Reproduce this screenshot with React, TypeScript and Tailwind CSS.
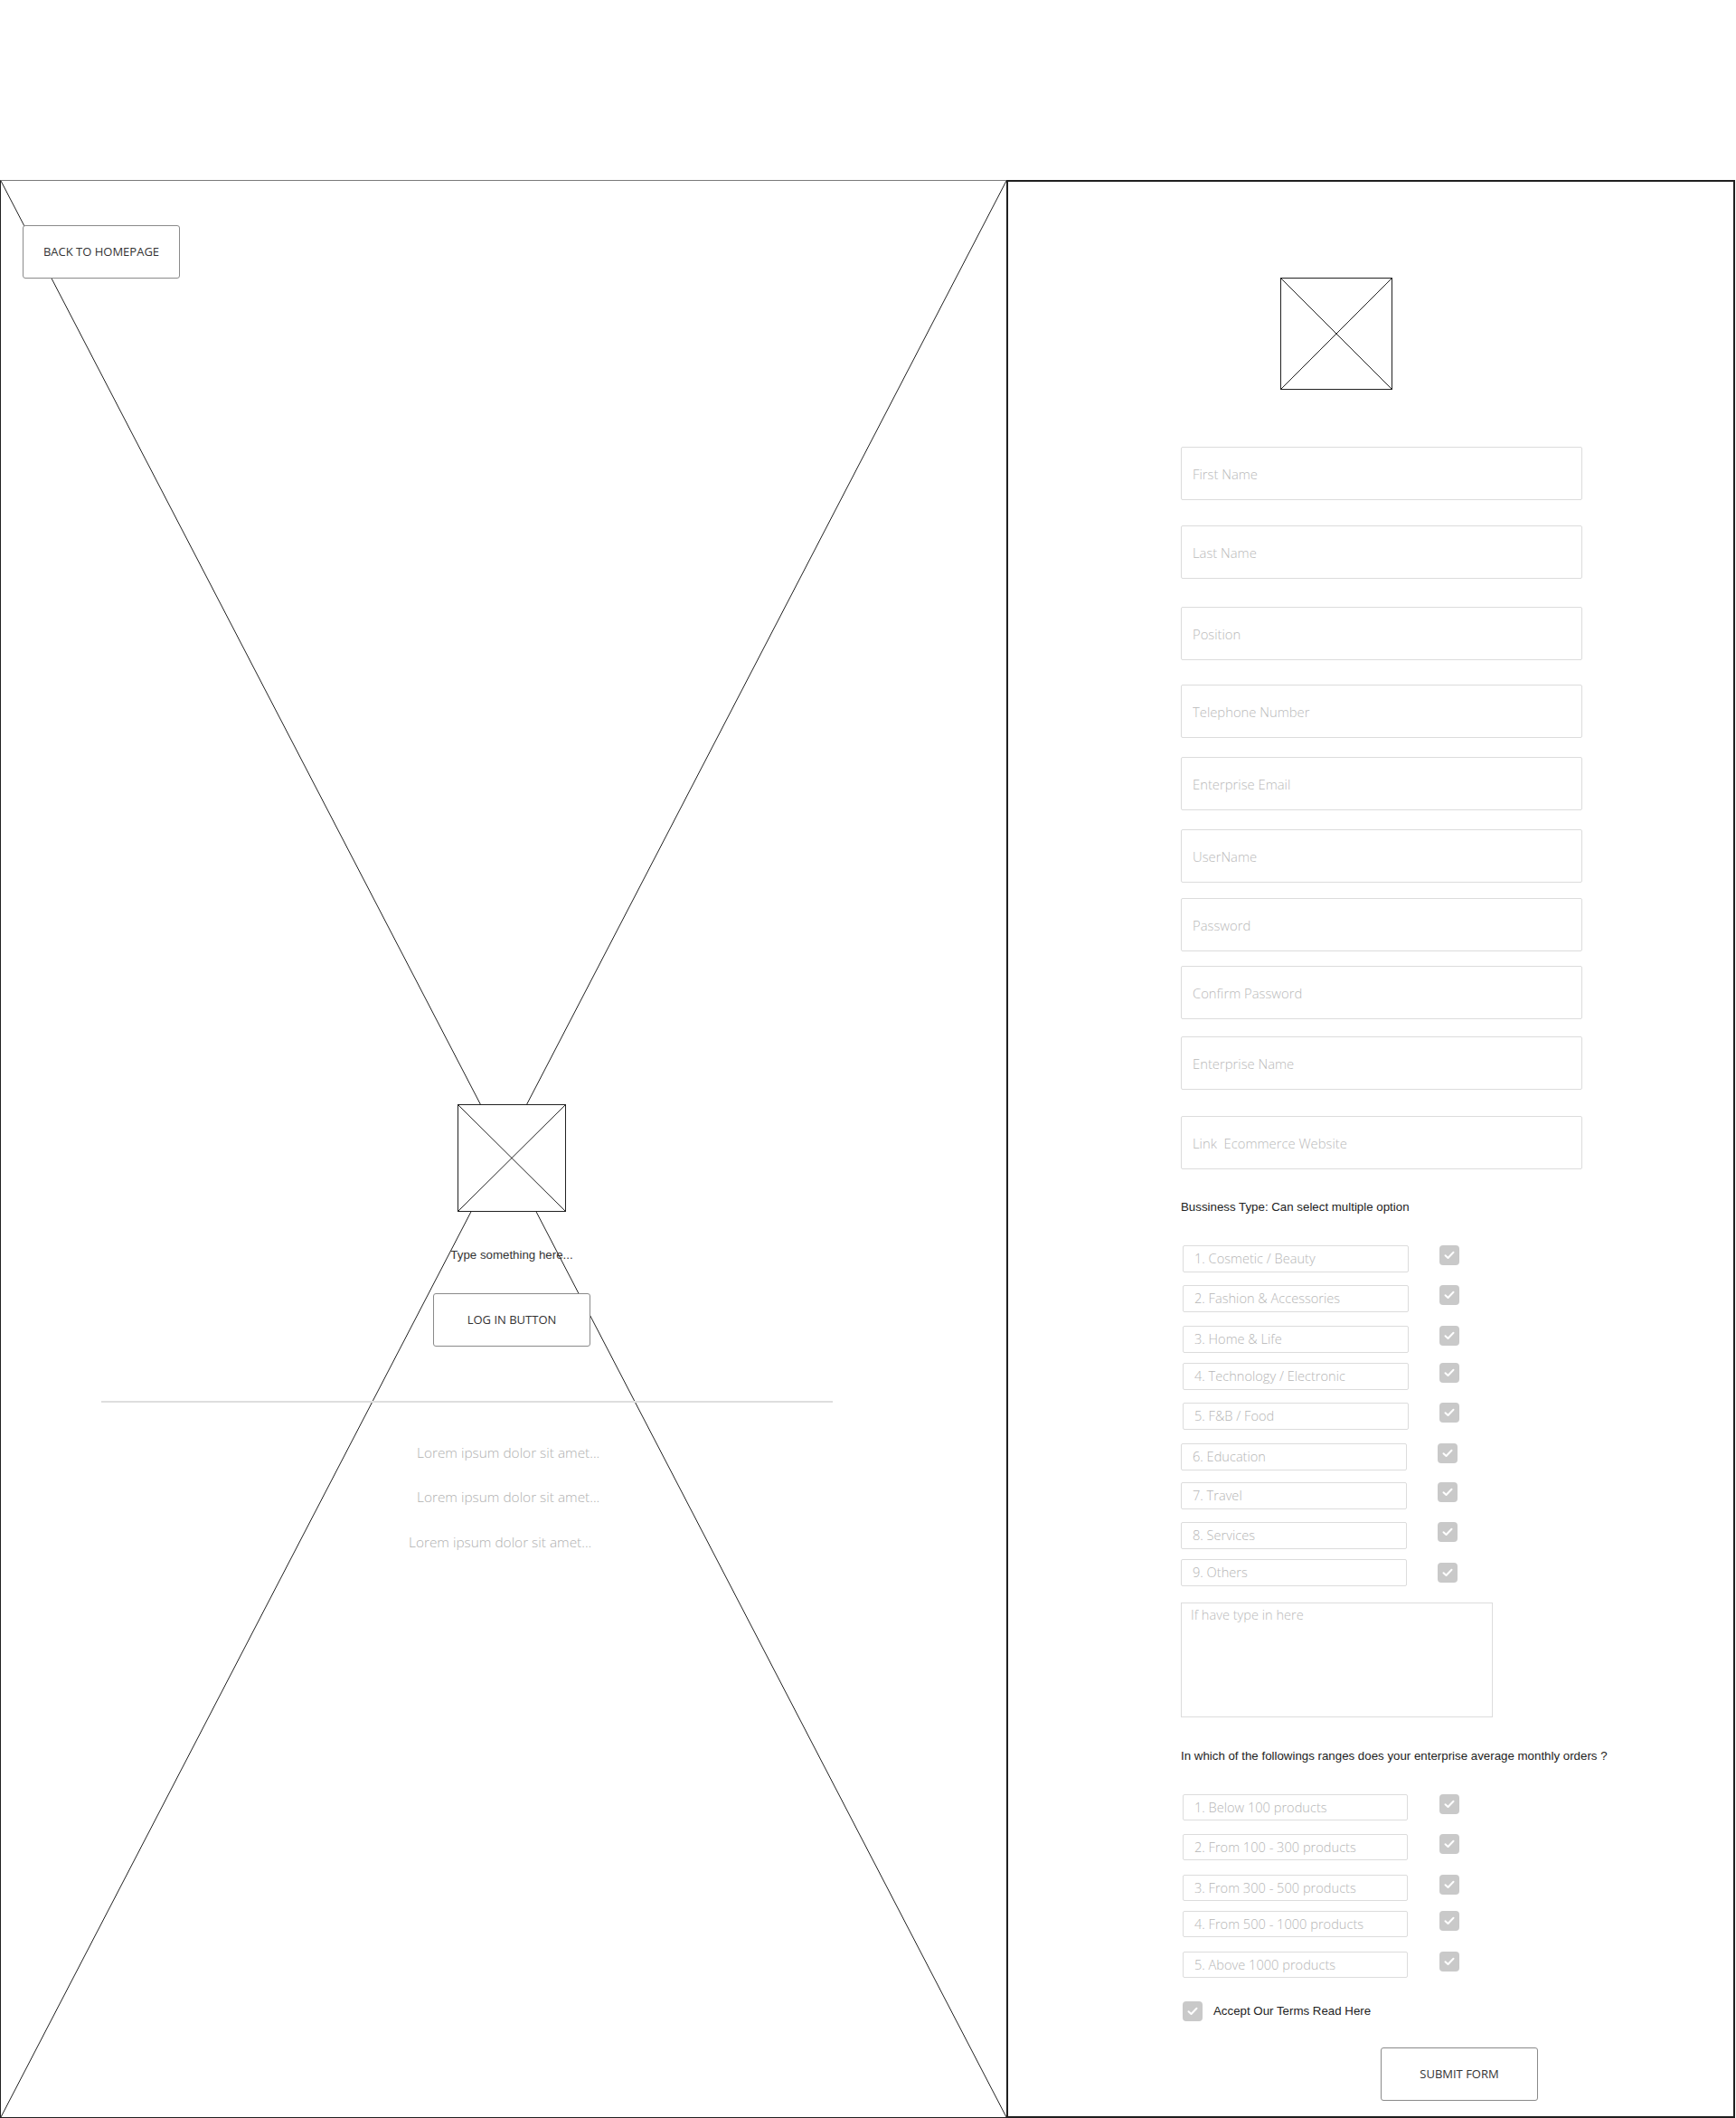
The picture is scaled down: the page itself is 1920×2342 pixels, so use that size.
import React from "react";

const fields = [
  { label: "First Name", mt: "mt-[63px]" },
  { label: "Last Name", mt: "mt-[28px]" },
  { label: "Position", mt: "mt-[31px]" },
  { label: "Telephone Number", mt: "mt-[27px]" },
  { label: "Enterprise Email", mt: "mt-[21px]" },
  { label: "UserName", mt: "mt-[21px]" },
  { label: "Password", mt: "mt-[17px]" },
  { label: "Confirm Password", mt: "mt-[16px]" },
  { label: "Enterprise Name", mt: "mt-[19px]" },
  { label: "Link  Ecommerce Website", mt: "mt-[29px]" },
];

const businessTypes = [
  { label: "1. Cosmetic / Beauty", mt: "mt-[34px]", box: "ml-[2px] w-[250px]", cb: "mt-0" },
  { label: "2. Fashion & Accessories", mt: "mt-[14px]", box: "ml-[2px] w-[250px]", cb: "mt-0" },
  { label: "3. Home & Life", mt: "mt-[15px]", box: "ml-[2px] w-[250px]", cb: "mt-0" },
  { label: "4. Technology / Electronic", mt: "mt-[11px]", box: "ml-[2px] w-[250px]", cb: "mt-0" },
  { label: "5. F&B / Food", mt: "mt-[14px]", box: "ml-[2px] w-[250px]", cb: "mt-0" },
  { label: "6. Education", mt: "mt-[15px]", box: "ml-0 w-[250px]", cb: "mt-0" },
  { label: "7. Travel", mt: "mt-[13px]", box: "ml-0 w-[250px]", cb: "mt-0" },
  { label: "8. Services", mt: "mt-[14px]", box: "ml-0 w-[250px]", cb: "mt-0" },
  { label: "9. Others", mt: "mt-[11px]", box: "ml-0 w-[250px]", cb: "mt-[4px]" },
];

const orderRanges = [
  { label: "1. Below 100 products", mt: "mt-[34px]" },
  { label: "2. From 100 - 300 products", mt: "mt-[15px]" },
  { label: "3. From 300 - 500 products", mt: "mt-[16px]" },
  { label: "4. From 500 - 1000 products", mt: "mt-[11px]" },
  { label: "5. Above 1000 products", mt: "mt-[16px]" },
];

function Check({ className = "" }: { className?: string }) {
  return (
    <div className={`w-[22px] h-[22px] shrink-0 rounded-[4px] bg-[#c9c9c9] flex items-center justify-center ${className}`}>
      <svg width="12" height="10" viewBox="0 0 12 10" fill="none">
        <path d="M1.5 5.2 L4.5 8 L10.5 1.8" stroke="white" strokeWidth="2" strokeLinecap="round" strokeLinejoin="round" />
      </svg>
    </div>
  );
}

function ImageBox({ className = "" }: { className?: string }) {
  return (
    <div className={`relative bg-white border-[1.5px] border-[#222] ${className}`}>
      <svg className="absolute inset-0 w-full h-full" preserveAspectRatio="none" viewBox="0 0 100 100">
        <line x1="0" y1="0" x2="100" y2="100" stroke="#222" strokeWidth="1" vectorEffect="non-scaling-stroke" />
        <line x1="100" y1="0" x2="0" y2="100" stroke="#222" strokeWidth="1" vectorEffect="non-scaling-stroke" />
      </svg>
    </div>
  );
}

const sans = "font-['Open_Sans',sans-serif]";
const arial = "font-['Liberation_Sans',Arial,sans-serif]";

export default function App() {
  return (
    <div className="w-[1920px] h-[2342px] bg-white pt-[199px] flex overflow-hidden">
      {/* Left: hero placeholder */}
      <section className="relative w-[1113px] h-[2143px] border-t border-t-[#7a7a7a] border-l border-l-[#222] border-b border-b-[#222] shrink-0">
        <svg className="absolute inset-0 w-full h-full" preserveAspectRatio="none" viewBox="0 0 100 100">
          <line x1="0" y1="0" x2="100" y2="100" stroke="#222" strokeWidth="1" vectorEffect="non-scaling-stroke" />
          <line x1="100" y1="0" x2="0" y2="100" stroke="#222" strokeWidth="1" vectorEffect="non-scaling-stroke" />
        </svg>
        <div className="relative flex flex-col">
          <button className={`mt-[49px] ml-[24px] w-[174px] h-[59px] bg-white border border-[#8a8a8a] rounded-[3px] text-[13px] text-[#333] ${sans}`}>
            BACK TO HOMEPAGE
          </button>

          <div className="ml-[478px] w-[174px] flex flex-col items-center">
            <ImageBox className="mt-[913px] w-[120px] h-[119px]" />
            <p className={`mt-[40px] text-[13.3px] leading-4 text-[#333] whitespace-nowrap ${arial}`}>Type something here...</p>
            <button className={`mt-[34px] w-[174px] h-[59px] bg-white border border-[#8a8a8a] rounded-[3px] text-[13px] text-[#333] ${sans}`}>
              LOG IN BUTTON
            </button>
          </div>

          <div className="mt-[60px] ml-[111px] w-[809px] h-[2px] bg-[#dedede]" />

          <div className={`flex flex-col text-[15.4px] leading-5 font-light text-[#b0b0b0] ${sans}`}>
            <p className="mt-[46px] ml-[460px]">Lorem ipsum dolor sit amet...</p>
            <p className="mt-[29px] ml-[460px]">Lorem ipsum dolor sit amet...</p>
            <p className="mt-[30px] ml-[451px]">Lorem ipsum dolor sit amet...</p>
          </div>
        </div>
      </section>

      {/* Right: registration form */}
      <section className="w-[806px] h-[2143px] border-2 border-[#1f1f1f] shrink-0 pl-[191px] flex flex-col">
        <ImageBox className="mt-[106px] ml-[110px] w-[124px] h-[124px]" />

        {fields.map((f) => (
          <input
            key={f.label}
            placeholder={f.label}
            className={`${f.mt} w-[444px] h-[59px] shrink-0 border border-[#dcdcdc] rounded-[2px] px-[12px] text-[14.8px] font-light text-[#555] placeholder:text-[#b9b9b9] outline-none ${sans}`}
          />
        ))}

        <p className={`mt-[34px] text-[13.3px] leading-4 text-[#222] ${arial}`}>Bussiness Type: Can select multiple option</p>

        {businessTypes.map((b) => (
          <div key={b.label} className={`${b.mt} flex items-start`}>
            <div className={`${b.box} h-[30px] border border-[#dcdcdc] rounded-[2px] px-[12px] flex items-center text-[14.6px] font-light text-[#b5b5b5] whitespace-nowrap ${sans}`}>
              {b.label}
            </div>
            <Check className={`ml-[34px] ${b.cb}`} />
          </div>
        ))}

        <textarea
          placeholder="If have type in here"
          className={`mt-[18px] w-[345px] h-[127px] shrink-0 resize-none border border-[#dcdcdc] px-[10px] pt-[2px] text-[14.6px] leading-5 font-light placeholder:text-[#b9b9b9] outline-none ${sans}`}
        />

        <p className={`mt-[35px] text-[13.3px] leading-4 text-[#222] ${arial}`}>
          In which of the followings ranges does your enterprise average monthly orders ?
        </p>

        {orderRanges.map((o) => (
          <div key={o.label} className={`${o.mt} flex items-start`}>
            <div className={`ml-[2px] w-[249px] h-[29px] border border-[#dcdcdc] rounded-[2px] px-[12px] flex items-center text-[14.6px] font-light text-[#b5b5b5] whitespace-nowrap ${sans}`}>
              {o.label}
            </div>
            <Check className="ml-[35px]" />
          </div>
        ))}

        <div className="mt-[26px] ml-[2px] flex items-center">
          <Check />
          <span className={`ml-[12px] text-[13.3px] text-[#222] ${arial}`}>Accept Our Terms Read Here</span>
        </div>

        <button className={`mt-[29px] ml-[221px] w-[174px] h-[59px] bg-white border border-[#8a8a8a] rounded-[3px] text-[13px] text-[#333] ${sans}`}>
          SUBMIT FORM
        </button>
      </section>
    </div>
  );
}
